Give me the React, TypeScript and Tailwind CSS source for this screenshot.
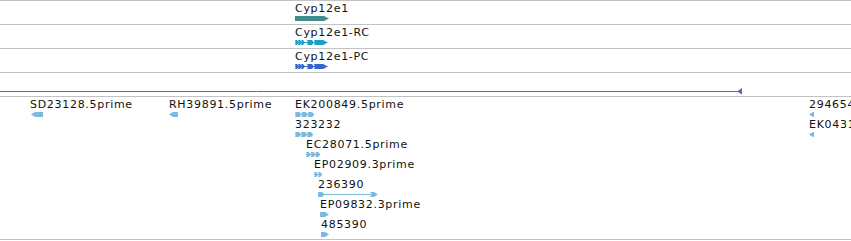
import React from "react";

const LINE = "border-[#c2c2c2]";

function Chevrons({ n, w, color }: { n: number; w: number; color: string }) {
  const step = w / n;
  const parts = [];
  for (let i = 0; i < n; i++) {
    const x = i * step;
    parts.push(
      <polygon
        key={i}
        points={`${x},0 ${x + step - 2},0 ${x + step + 0.5},2.5 ${x + step - 2},5 ${x},5 ${x + 1},2.5`}
        fill={color}
      />
    );
  }
  return (
    <svg width={w + 1} height={5} className="block">
      <line x1="0" y1="2.5" x2={w} y2="2.5" stroke={color} strokeWidth="1" />
      {parts}
    </svg>
  );
}

function GeneBar() {
  return (
    <svg width={34} height={5} className="block">
      <polygon points="0,0 29,0 34,2.5 29,5 0,5" fill="#3f8e8e" />
    </svg>
  );
}

function Transcript({ color }: { color: string }) {
  return (
    <svg width={34} height={5} className="block">
      <line x1="0" y1="2.5" x2="30" y2="2.5" stroke={color} strokeWidth="1" />
      <polygon points="0,0 2,0 4,2.5 2,5 0,5 1,2.5" fill={color} />
      <polygon points="3,0 5,0 7,2.5 5,5 3,5 4,2.5" fill={color} />
      <polygon points="6,0 8,0 10,2.5 8,5 6,5 7,2.5" fill={color} />
      <polygon points="12,0 17,0 19,2.5 17,5 12,5 13,2.5" fill={color} />
      <polygon points="19,0 28,0 33,2.5 28,5 19,5 20,2.5" fill={color} />
    </svg>
  );
}

function LeftArrow({ w, color = "#7db8de" }: { w: number; color?: string }) {
  return (
    <svg width={w} height={5} className="block">
      <polygon points={`0,2.5 4,0 ${w},0 ${w},5 4,5`} fill={color} />
    </svg>
  );
}

function RightArrow({ w, color = "#7db8de" }: { w: number; color?: string }) {
  return (
    <svg width={w} height={5} className="block">
      <polygon points={`0,0 ${w - 4},0 ${w},2.5 ${w - 4},5 0,5`} fill={color} />
    </svg>
  );
}

function Spliced({ color = "#7db8de" }: { color?: string }) {
  return (
    <svg width={61} height={5} className="block">
      <line x1="6" y1="2.5" x2="56" y2="2.5" stroke={color} strokeWidth="1" />
      <polygon points="0,0 4,0 7,2.5 4,5 0,5" fill={color} />
      <polygon points="52,0 56,0 60,2.5 56,5 52,5 54,2.5" fill={color} />
    </svg>
  );
}

function Feature({
  x,
  y,
  label,
  children,
}: {
  x: number;
  y: number;
  label: string;
  children: React.ReactNode;
}) {
  return (
    <div className="absolute flex flex-col" style={{ left: x, top: y }}>
      <div className="h-[12px] leading-[12px] whitespace-nowrap tracking-[0.7px]">{label}</div>
      <div className="mt-[1px]">{children}</div>
    </div>
  );
}

export default function App() {
  return (
    <div className="w-[851px] h-[241px] overflow-hidden bg-white text-[11px] text-[#111] font-['DejaVu_Sans',sans-serif]">
      <div className={`border-t ${LINE}`}>
        <div className={`relative h-[24px] border-b ${LINE}`}>
          <Feature x={295} y={2} label="Cyp12e1">
            <GeneBar />
          </Feature>
        </div>
        <div className={`relative h-[24px] border-b ${LINE}`}>
          <Feature x={295} y={2} label="Cyp12e1-RC">
            <Transcript color="#1b9ec4" />
          </Feature>
        </div>
        <div className={`relative h-[24px] border-b ${LINE}`}>
          <Feature x={295} y={2} label="Cyp12e1-PC">
            <Transcript color="#3465cf" />
          </Feature>
        </div>
        <div className={`relative h-[24px] border-b ${LINE}`}>
          <svg width={851} height={23} className="absolute left-0 top-0">
            <line x1="0" y1="18.5" x2="739" y2="18.5" stroke="#6f5fb0" strokeWidth="1" />
            <polygon points="742,15 742,21.5 737,18.5" fill="#6f5fb0" />
          </svg>
        </div>
        <div className={`relative h-[143px] border-b ${LINE}`}>
          <Feature x={30} y={2} label="SD23128.5prime">
            <div className="ml-[1px]">
              <LeftArrow w={12} />
            </div>
          </Feature>
          <Feature x={169} y={2} label="RH39891.5prime">
            <LeftArrow w={9} />
          </Feature>
          <Feature x={295} y={2} label="EK200849.5prime">
            <Chevrons n={3} w={19} color="#7db8de" />
          </Feature>
          <Feature x={295} y={22} label="323232">
            <Chevrons n={3} w={18} color="#7db8de" />
          </Feature>
          <Feature x={306} y={42} label="EC28071.5prime">
            <Chevrons n={3} w={14} color="#7db8de" />
          </Feature>
          <Feature x={314} y={62} label="EP02909.3prime">
            <Chevrons n={2} w={8} color="#7db8de" />
          </Feature>
          <Feature x={318} y={82} label="236390">
            <Spliced />
          </Feature>
          <Feature x={320} y={102} label="EP09832.3prime">
            <RightArrow w={9} />
          </Feature>
          <Feature x={321} y={122} label="485390">
            <RightArrow w={8} />
          </Feature>
          <Feature x={809} y={2} label="2946544">
            <LeftArrow w={5} />
          </Feature>
          <Feature x={809} y={22} label="EK043112.5prime">
            <LeftArrow w={5} />
          </Feature>
        </div>
      </div>
    </div>
  );
}
